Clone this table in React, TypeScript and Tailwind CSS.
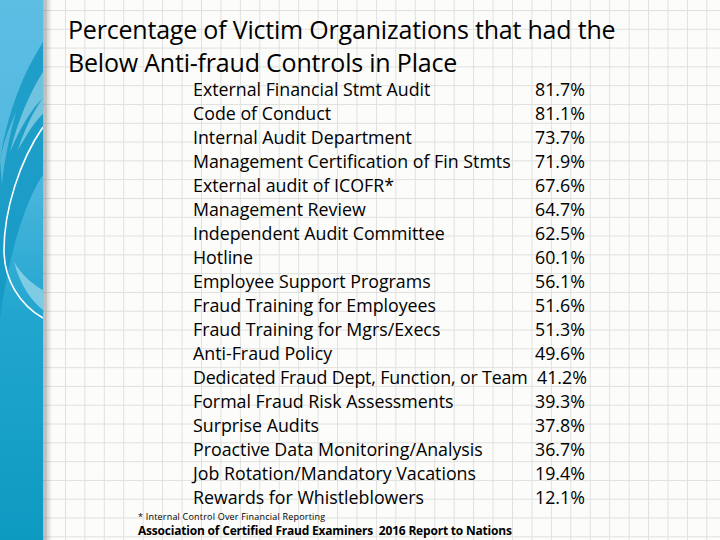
import React from "react";

const rows: [string, string][] = [
  ["External Financial Stmt Audit", "81.7%"],
  ["Code of Conduct", "81.1%"],
  ["Internal Audit Department", "73.7%"],
  ["Management Certification of Fin Stmts", "71.9%"],
  ["External audit of ICOFR*", "67.6%"],
  ["Management Review", "64.7%"],
  ["Independent Audit Committee", "62.5%"],
  ["Hotline", "60.1%"],
  ["Employee Support Programs", "56.1%"],
  ["Fraud Training for Employees", "51.6%"],
  ["Fraud Training for Mgrs/Execs", "51.3%"],
  ["Anti-Fraud Policy", "49.6%"],
  ["Dedicated Fraud Dept, Function, or Team", "41.2%"],
  ["Formal Fraud Risk Assessments", "39.3%"],
  ["Surprise Audits", "37.8%"],
  ["Proactive Data Monitoring/Analysis", "36.7%"],
  ["Job Rotation/Mandatory Vacations", "19.4%"],
  ["Rewards for Whistleblowers", "12.1%"],
];

function Sidebar() {
  return (
    <div className="relative w-[43px] shrink-0 h-[540px] bg-[linear-gradient(to_bottom,#5dbee4_0%,#52b8df_30%,#22a6cf_58%,#0d9ac1_100%)] overflow-hidden">
      <svg width="43" height="540" viewBox="0 0 43 540" className="absolute inset-0">
        <path d="M43 42 C24 72 8 110 0 160 L0 320 C6 270 22 205 43 175 Z" fill="#1499c4" opacity="0.85" />
        <path d="M43 72 C30 92 18 120 10 152 C20 128 32 108 43 98 Z" fill="#a6dcee" opacity="0.6" />
        <path d="M43 98 C34 110 24 130 18 150 C28 132 36 120 43 114 Z" fill="#e4f5fa" opacity="0.45" />
        <path d="M0 160 C4 140 10 125 16 112 C10 135 4 160 2 185 Z" fill="#8fd2ea" opacity="0.5" />
        <path d="M43 127 C20 160 4 210 4 250 C4 280 20 305 43 318" fill="none" stroke="#ffffff" strokeWidth="1.6" />
        <path d="M43 290 C33 285 22 275 14 262 C20 285 32 302 43 310 Z" fill="#c4e8f4" opacity="0.55" />
      </svg>
    </div>
  );
}

export default function App() {
  return (
    <div className="flex w-[720px] h-[540px] overflow-hidden bg-[#fcfcfa] font-['Open_Sans',sans-serif] text-black">
      <Sidebar />
      <div className="relative flex-1 h-[540px] bg-[linear-gradient(to_right,#e0e0de_1px,transparent_1px),linear-gradient(to_bottom,#e0e0de_1px,transparent_1px)] bg-[size:19.45px_18.8px] bg-[position:2.5px_10px]">
        <div className="absolute left-0 top-0 w-[9px] h-full bg-[linear-gradient(to_right,rgba(0,0,0,0.28),rgba(0,0,0,0))]" />
        <div className="pl-[25px] pt-[13px]">
          <h1 className="text-[25px] leading-[33px] font-normal tracking-[-0.2px] whitespace-nowrap">
            Percentage of Victim Organizations that had the
            <br />
            Below Anti-fraud Controls in Place
          </h1>
          <div className="ml-[125px] mt-[-2px] grid grid-cols-[342px_auto] text-[17.8px] leading-[24px]">
            {rows.map(([label, pct], i) => (
              <React.Fragment key={label}>
                <div className={i === 12 ? "whitespace-nowrap tracking-[-0.15px]" : "whitespace-nowrap"}>{label}</div>
                <div className={i === 12 ? "pl-[2px]" : ""}>{pct}</div>
              </React.Fragment>
            ))}
          </div>
          <div className="ml-[70px] mt-[2px] text-[9px] leading-[12px] tracking-[0.2px]">* Internal Control Over Financial Reporting</div>
          <div className="ml-[70px] text-[12px] leading-[15px] font-bold tracking-[-0.2px] whitespace-nowrap">
            Association of Certified Fraud Examiners&nbsp; 2016 Report to Nations
          </div>
        </div>
      </div>
    </div>
  );
}
